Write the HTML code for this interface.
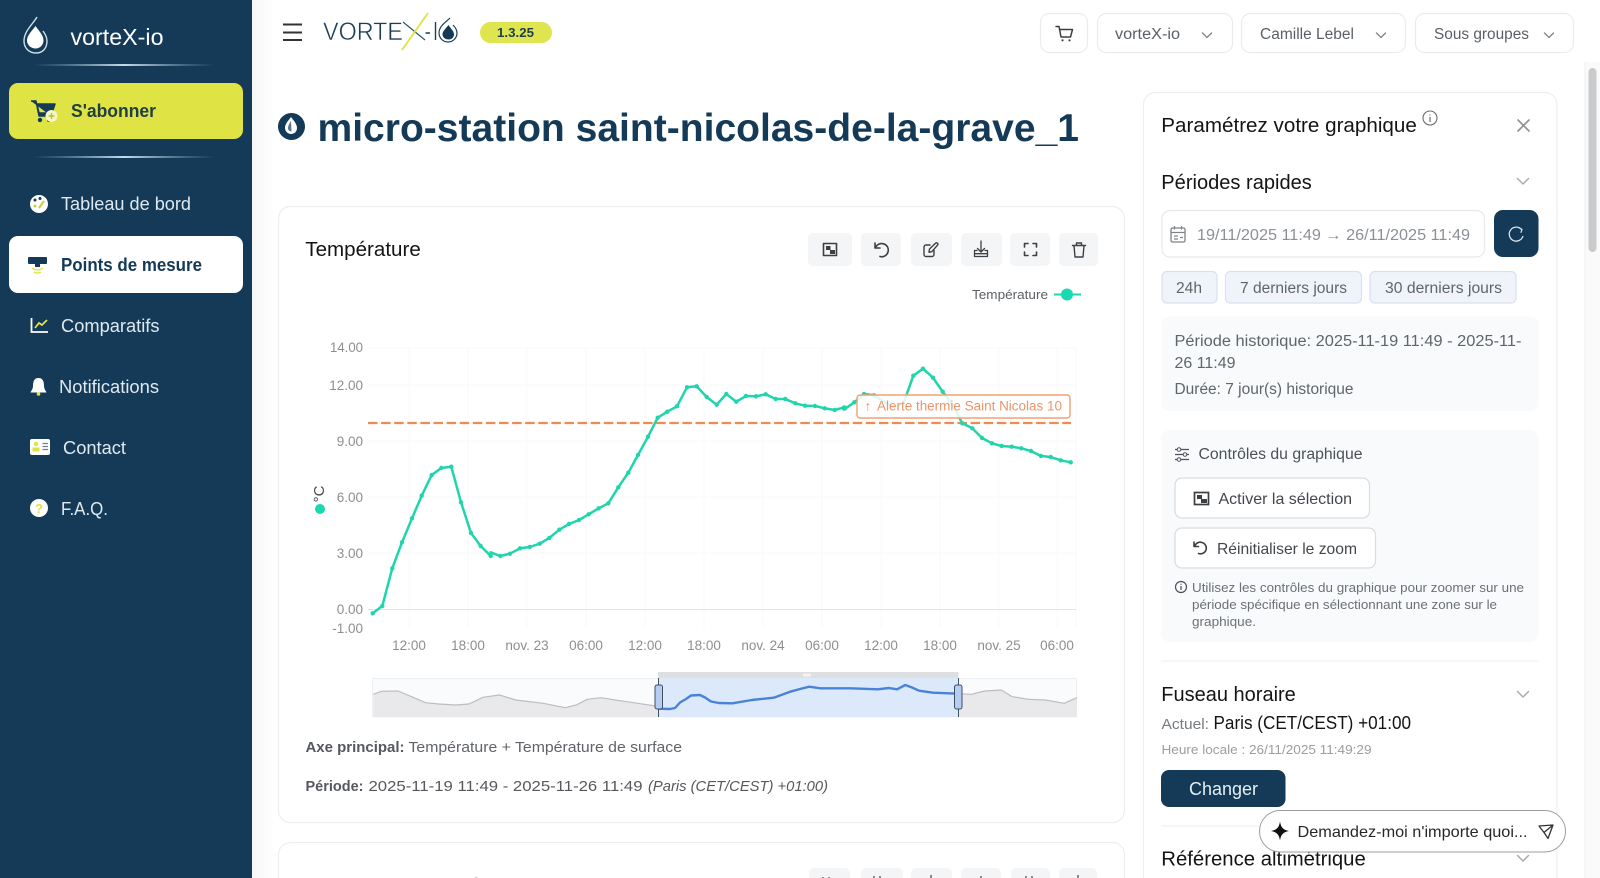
<!DOCTYPE html>
<html lang="fr"><head><meta charset="utf-8"><title>micro-station saint-nicolas-de-la-grave_1</title>
<style>
html,body{margin:0;padding:0;background:#fff;width:1600px;height:878px;overflow:hidden}
svg{display:block}
text{font-family:"Liberation Sans",sans-serif;white-space:pre}
.b{font-weight:700}
.g{fill:#5f656c;font-size:15.5px}
.y{fill:#8e8e91;font-size:13.5px;text-anchor:end}
.x{fill:#8e8e91;font-size:13.5px}
.n{fill:#dfe9f0;font-size:18px}
.h{fill:#141414;font-size:20.5px}
.i{fill:none;stroke:#3d4043;stroke-width:1.6;stroke-linecap:round;stroke-linejoin:round}
.c{fill:none;stroke:#a3a8ad;stroke-width:1.400;stroke-linecap:round;stroke-linejoin:round}
</style></head><body>
<svg width="1600" height="878" viewBox="0 0 1600 878" xmlns="http://www.w3.org/2000/svg">
<defs>
<linearGradient id="dv"><stop offset="0" stop-color="#8fb4cc" stop-opacity="0"/><stop offset=".5" stop-color="#c4dbe8"/><stop offset="1" stop-color="#8fb4cc" stop-opacity="0"/></linearGradient>
<linearGradient id="sh"><stop offset="0" stop-color="#f6f6f6"/><stop offset="1" stop-color="#fff"/></linearGradient>
</defs>
<rect width="1600" height="878" fill="#fff"/>
<rect x="252" y="0" width="22" height="878" fill="url(#sh)"/>

<!-- sidebar -->
<rect width="252" height="878" fill="#143a57"/>
<path d="M37 17C33 24 24 31 24 41C24 48 29 53 36 53C43 53 47 48 47 41C47 37 45 34 43 31" fill="none" stroke="#cfe0ea" stroke-width="1.400"/>
<path d="M35.500 26C32 31 27 35 27 40.500C27 45 31 48.500 35.500 48.500C40 48.500 43.500 45 43.500 40.500C43.500 35 39 31 35.500 26Z" fill="#fff"/>
<text x="70.500" y="45" font-size="23" fill="#fff" textLength="93" lengthAdjust="spacingAndGlyphs">vorteX-io</text>
<rect x="33" y="64" width="182" height="2" fill="url(#dv)"/>
<rect x="9" y="83" width="234" height="56" rx="9" fill="#dfe343"/>
<path d="M31 101H36L39 116H51M37 104H55L52 113H39Z" fill="#143a57" stroke="#143a57" stroke-width="1.500" stroke-linejoin="round"/>
<circle cx="40" cy="120" r="2.200" fill="#143a57"/><circle cx="49" cy="120" r="2" fill="#143a57"/>
<circle cx="51.500" cy="116" r="6" fill="#f4f6c4"/><path d="M48.500 116H54.500M51.500 113V119" stroke="#b8bd3b" stroke-width="1.400"/>
<text x="71" y="117" font-size="18" class="b" fill="#1f3f45" textLength="85" lengthAdjust="spacingAndGlyphs">S'abonner</text>
<rect x="33" y="156" width="182" height="2" fill="url(#dv)"/>

<circle cx="39" cy="204" r="9" fill="#fff"/><circle cx="35" cy="200" r="1.500" fill="#143a57"/><circle cx="40" cy="198.500" r="1.500" fill="#143a57"/><circle cx="35" cy="206" r="1.500" fill="#c9ce3a"/><path d="M39 208L44 201" stroke="#c9ce3a" stroke-width="2"/>
<text x="61" y="210" class="n" textLength="130" lengthAdjust="spacingAndGlyphs">Tableau de bord</text>

<rect x="9" y="236" width="234" height="57" rx="9" fill="#fff"/>
<rect x="28" y="257" width="19" height="7" rx="1" fill="#143a57"/><rect x="35" y="264" width="5" height="3" fill="#143a57"/><path d="M32 268Q37.500 272 43 268M34 272Q37.500 274 41 272" stroke="#dfe343" stroke-width="1.300" fill="none"/>
<text x="61" y="271" font-size="18" class="b" fill="#143a57" textLength="141" lengthAdjust="spacingAndGlyphs">Points de mesure</text>

<path d="M31.500 318V332H48" fill="none" stroke="#fff" stroke-width="1.800"/><path d="M35 328L39 323L42 325L47 320" fill="none" stroke="#dfe343" stroke-width="1.800"/>
<text x="61" y="332" class="n" textLength="98.500" lengthAdjust="spacingAndGlyphs">Comparatifs</text>

<path d="M38.500 378C34 378 33 382 33 386C33 389 31 391 30.500 392.500H46.500C46 391 44 389 44 386C44 382 43 378 38.500 378Z" fill="#fff"/><circle cx="38.500" cy="394" r="1.800" fill="#dfe343"/>
<text x="59" y="393" class="n" textLength="100" lengthAdjust="spacingAndGlyphs">Notifications</text>

<rect x="30" y="439" width="20" height="16" rx="2" fill="#fff"/><circle cx="36" cy="444" r="2.200" fill="#dfe343"/><rect x="32.500" y="447.500" width="7" height="4" fill="#dfe343"/><path d="M42.500 443.500H48M42.500 446.500H48M42.500 449.500H48" stroke="#6f7f8c" stroke-width="1.200"/>
<text x="63" y="454" class="n" textLength="63" lengthAdjust="spacingAndGlyphs">Contact</text>

<circle cx="39" cy="508" r="9" fill="#fff"/><text x="39" y="513" font-size="13" class="b" fill="#dfe343" text-anchor="middle">?</text>
<text x="61" y="515" class="n" textLength="47" lengthAdjust="spacingAndGlyphs">F.A.Q.</text>

<!-- top bar -->
<path d="M283 24.500H302M283 32.500H302M283 40H302" stroke="#333" stroke-width="1.900"/>
<text x="323" y="40" font-size="25" fill="#1d3f55" stroke="#fff" stroke-width=".45" textLength="80" lengthAdjust="spacingAndGlyphs">VORTE</text>
<path d="M403 22L425 40" stroke="#32566c" stroke-width="1.200"/>
<path d="M402 50L428 13" stroke="#dfe343" stroke-width="1.800"/>
<path d="M425.500 33H430" stroke="#1d3f55" stroke-width="1.500"/>
<path d="M435.500 22V40" stroke="#1d3f55" stroke-width="1.400"/>
<path d="M450 18C446 22 439 26 439 33C439 38 443 42 448 42C453 42 457 38 457 33C457 30 455 27 453 25" fill="none" stroke="#1d3f55" stroke-width="1.200"/>
<path d="M448.500 25C445.500 29 442.500 31 442.500 34.500C442.500 37.500 445.500 39.500 448.500 39.500C451.500 39.500 454 37.500 454 34.500C454 31 451 29 448.500 25Z" fill="#143a57"/>
<rect x="480" y="22" width="72" height="21" rx="10.500" fill="#dfe54e"/>
<text x="497" y="37" font-size="13" class="b" fill="#1f3f50" textLength="37" lengthAdjust="spacingAndGlyphs">1.3.25</text>

<g fill="#fff" stroke="#e9ecef" stroke-width="1.200">
<rect x="1040.500" y="13.500" width="47" height="39" rx="9"/>
<rect x="1097.500" y="13.500" width="135" height="39" rx="9"/>
<rect x="1241.500" y="13.500" width="164" height="39" rx="9"/>
<rect x="1415.500" y="13.500" width="158" height="39" rx="9"/>
</g>
<path d="M1056 26.500H1059L1061 37H1070.500L1072.500 29.500H1060" class="i" style="stroke-width:1.500"/><circle cx="1062.500" cy="40.300" r="1.100" fill="#3d4043"/><circle cx="1069.500" cy="40.300" r="1.100" fill="#3d4043"/>
<g font-size="15.500" fill="#5b6066">
<text x="1115" y="39" textLength="65" lengthAdjust="spacingAndGlyphs">vorteX-io</text>
<text x="1260" y="39" textLength="94" lengthAdjust="spacingAndGlyphs">Camille Lebel</text>
<text x="1434" y="39" textLength="95" lengthAdjust="spacingAndGlyphs">Sous groupes</text>
</g>
<path d="M1202.500 33L1207 37.500L1211.500 33M1376.500 33L1381 37.500L1385.500 33M1544.500 33L1549 37.500L1553.500 33" class="c" style="stroke:#82878d"/>

<!-- scrollbar -->
<rect x="1585" y="62" width="15" height="816" fill="#fafafa"/><path d="M1585 62V878" stroke="#efefef"/>
<rect x="1588.500" y="68" width="8" height="184" rx="4" fill="#c8cacc"/>

<!-- title -->
<circle cx="291.500" cy="126.500" r="13.500" fill="#143a57"/>
<path d="M291 117C288 121 285 124 285 128C285 131.500 288 134 291 134C294.500 134 297 131.500 297 128C297 124 294 121 291 117Z" fill="#fff"/>
<path d="M291 121C289 124 288 126 288 128C288 130 289.500 131.500 291.500 131.500" fill="#143a57" opacity=".7"/>
<text x="317.500" y="141" font-size="39" class="b" fill="#143a57" textLength="761.500" lengthAdjust="spacingAndGlyphs">micro-station saint-nicolas-de-la-grave_1</text>

<!-- main card -->
<rect x="278.500" y="206.500" width="846" height="616" rx="12" fill="#fff" stroke="#eceef0" stroke-width="1.200"/>
<text x="305.300" y="256" font-size="20.500" fill="#141414" textLength="115.500" lengthAdjust="spacingAndGlyphs">Température</text>
<g fill="#f4f5f6">
<rect x="808" y="233" width="44" height="33" rx="5"/><rect x="861" y="233" width="40" height="33" rx="5"/><rect x="911" y="233" width="41" height="33" rx="5"/><rect x="961" y="233" width="41" height="33" rx="5"/><rect x="1010" y="233" width="40" height="33" rx="5"/><rect x="1059" y="233" width="39" height="33" rx="5"/>
</g>
<g class="i">
<rect x="823.500" y="243.500" width="13" height="12" fill="none" stroke="#3d4043"/><rect x="826" y="246" width="4.500" height="4" fill="#3d4043" stroke="none"/><rect x="830" y="250" width="5" height="4" fill="#3d4043" stroke="none"/>
<path d="M875 243V248H880M875.500 247.500C877 244.500 880 243 883.500 243.800C887 244.800 889 248 888 252C887 255.500 883.500 257.500 880 256.500"/>
<path d="M934 250.500V254.500A2 2 0 0 1 932 256.500H926A2 2 0 0 1 924 254.500V247A2 2 0 0 1 926 245H930M929 252.300L929.500 249L935.500 243.200A1.300 1.300 0 0 1 937.500 245.200L931.800 251.700Z" style="stroke-width:1.400"/>
<path d="M981 241V252M977.500 248.500L981 252L984.500 248.500M977 250.500H974.500V256.500H987.500V250.500H985M974.500 253.700H987.500" style="stroke-width:1.300"/>
<path d="M1024.500 247V243.500H1028M1033 243.500H1036.500V247M1036.500 252V255.500H1033M1028 255.500H1024.500V252" style="stroke-width:1.600"/>
<path d="M1072.500 245.500H1085.500M1074 245.500L1075 257H1083L1084 245.500M1076.500 245.500V243H1081.500V245.500" style="stroke-width:1.400"/>
</g>
<text x="972" y="299" font-size="13" fill="#5c5f63" textLength="76" lengthAdjust="spacingAndGlyphs">Température</text>
<path d="M1054 294.500H1081" stroke="#19d9b0" stroke-width="2"/><circle cx="1067" cy="294.500" r="6" fill="#19d9b0"/>

<!-- chart grid -->
<g stroke="#f8f8f9" stroke-width="1">
<path d="M368 348H1076M368 385H1076M368 441H1076M368 497H1076M368 553H1076"/>
<path d="M409 348V628M468 348V628M527 348V628M586 348V628M645 348V628M704 348V628M763 348V628M822 348V628M881 348V628M940 348V628M999 348V628M1057 348V628M1076 348V628"/>
</g>
<path d="M368 609.500H1076" stroke="#e4e5e7"/>
<text x="363" y="352" class="y" textLength="33" lengthAdjust="spacingAndGlyphs">14.00</text>
<text x="363" y="390" class="y">12.00</text>
<text x="363" y="446" class="y">9.00</text>
<text x="363" y="502" class="y">6.00</text>
<text x="363" y="558" class="y">3.00</text>
<text x="363" y="614" class="y">0.00</text>
<text x="363" y="633" class="y">-1.00</text>
<g class="x" text-anchor="middle">
<text x="409" y="650">12:00</text><text x="468" y="650">18:00</text><text x="527" y="650">nov. 23</text><text x="586" y="650">06:00</text><text x="645" y="650">12:00</text><text x="704" y="650">18:00</text><text x="763" y="650">nov. 24</text><text x="822" y="650">06:00</text><text x="881" y="650">12:00</text><text x="940" y="650">18:00</text><text x="999" y="650">nov. 25</text><text x="1057" y="650">06:00</text>
</g>
<text transform="translate(324,494) rotate(-90)" font-size="15" fill="#44474b" text-anchor="middle">°C</text>
<circle cx="320" cy="509" r="5" fill="#19d9b0"/>

<!-- threshold -->
<path d="M368 423H1071" stroke="#ee8a52" stroke-width="2.200" stroke-dasharray="9.500 3.600"/>

<!-- series -->
<polyline fill="none" stroke="#20d4ac" stroke-width="2.500" stroke-linejoin="round" points="372.700,613.300 382.300,606 392.300,568.300 402,542.300 412,518.300 421.700,495.700 431.700,475 441.300,468 451.300,466.700 461,502.300 471,533 480.700,546 490.700,556 490.700,552.300 500.300,556 510,553.700 520,548.300 529.700,547 539.700,543.700 549.300,538 559.300,529.700 569,524 579,520 588.700,514.300 598.700,508.300 608.300,503.300 618.300,487.300 628.300,472.700 638,455 648,436.700 657.700,417.700 667.300,411.700 677,406.300 687,387.300 696.700,386.300 706.700,397 716.700,404.700 726.300,394 736.300,401.700 746,396 756,396.300 765.700,394.300 775.700,399 785.300,399 795.300,403.300 805,405.700 815,406 824.700,408.300 834.700,410 844.300,407.300 844.300,409.300 854.300,402.300 864,394 874,395.300 883.700,401.700 893.700,407 903.300,404 913.300,375.700 923,368.700 933,377.700 942.700,391.700 952.700,405 962.300,423.300 972.300,428.300 982,438 992,443.300 1001.700,446 1011.700,446.700 1021.300,448.300 1031,451 1041,456 1050.700,457 1060.700,460.300 1070.700,462.300"/>
<g fill="#20d4ac">
<circle cx="372.700" cy="613.300" r="2.200"/><circle cx="382.300" cy="606" r="2.200"/><circle cx="392.300" cy="568.300" r="2.200"/><circle cx="402" cy="542.300" r="2.200"/><circle cx="412" cy="518.300" r="2.200"/><circle cx="421.700" cy="495.700" r="2.200"/><circle cx="431.700" cy="475" r="2.200"/><circle cx="441.300" cy="468" r="2.200"/><circle cx="451.300" cy="466.700" r="2.200"/><circle cx="461" cy="502.300" r="2.200"/><circle cx="471" cy="533" r="2.200"/><circle cx="480.700" cy="546" r="2.200"/><circle cx="490.700" cy="556" r="2.200"/><circle cx="500.300" cy="556" r="2.200"/><circle cx="510" cy="553.700" r="2.200"/><circle cx="520" cy="548.300" r="2.200"/><circle cx="529.700" cy="547" r="2.200"/><circle cx="539.700" cy="543.700" r="2.200"/><circle cx="549.300" cy="538" r="2.200"/><circle cx="559.300" cy="529.700" r="2.200"/><circle cx="569" cy="524" r="2.200"/><circle cx="579" cy="520" r="2.200"/><circle cx="588.700" cy="514.300" r="2.200"/><circle cx="598.700" cy="508.300" r="2.200"/><circle cx="608.300" cy="503.300" r="2.200"/><circle cx="618.300" cy="487.300" r="2.200"/><circle cx="628.300" cy="472.700" r="2.200"/><circle cx="638" cy="455" r="2.200"/><circle cx="648" cy="436.700" r="2.200"/><circle cx="657.700" cy="417.700" r="2.200"/><circle cx="667.300" cy="411.700" r="2.200"/><circle cx="677" cy="406.300" r="2.200"/><circle cx="687" cy="387.300" r="2.200"/><circle cx="696.700" cy="386.300" r="2.200"/><circle cx="706.700" cy="397" r="2.200"/><circle cx="716.700" cy="404.700" r="2.200"/><circle cx="726.300" cy="394" r="2.200"/><circle cx="736.300" cy="401.700" r="2.200"/><circle cx="746" cy="396" r="2.200"/><circle cx="756" cy="396.300" r="2.200"/><circle cx="765.700" cy="394.300" r="2.200"/><circle cx="775.700" cy="399" r="2.200"/><circle cx="785.300" cy="399" r="2.200"/><circle cx="795.300" cy="403.300" r="2.200"/><circle cx="805" cy="405.700" r="2.200"/><circle cx="815" cy="406" r="2.200"/><circle cx="824.700" cy="408.300" r="2.200"/><circle cx="834.700" cy="410" r="2.200"/><circle cx="844.300" cy="408" r="2.800"/><circle cx="854.300" cy="402.300" r="2.200"/><circle cx="864" cy="394" r="2.200"/><circle cx="874" cy="395.300" r="2.200"/><circle cx="913.300" cy="375.700" r="2.200"/><circle cx="923" cy="368.700" r="2.200"/><circle cx="933" cy="377.700" r="2.200"/><circle cx="942.700" cy="391.700" r="2.200"/><circle cx="962.300" cy="423.300" r="2.200"/><circle cx="972.300" cy="428.300" r="2.200"/><circle cx="982" cy="438" r="2.200"/><circle cx="992" cy="443.300" r="2.200"/><circle cx="1001.700" cy="446" r="2.200"/><circle cx="1011.700" cy="446.700" r="2.200"/><circle cx="1021.300" cy="448.300" r="2.200"/><circle cx="1031" cy="451" r="2.200"/><circle cx="1041" cy="456" r="2.200"/><circle cx="1050.700" cy="457" r="2.200"/><circle cx="1060.700" cy="460.300" r="2.200"/><circle cx="1070.700" cy="462.300" r="2.200"/>
</g>
<rect x="857" y="395" width="213" height="23" rx="3" fill="#fff" fill-opacity=".85" stroke="#f0a071" stroke-width="1.400"/>
<text x="864.500" y="410.500" font-size="13.500" fill="#ec9467">↑</text>
<text x="877" y="410.500" font-size="13.500" fill="#ec9467" textLength="185" lengthAdjust="spacingAndGlyphs">Alerte thermie Saint Nicolas 10</text>

<!-- range slider -->
<rect x="372.500" y="678.500" width="704" height="38.500" fill="#fafbfd" stroke="#eef0f3"/>
<rect x="658" y="672" width="300.500" height="6" fill="#dedfe1"/><rect x="803" y="673.500" width="8" height="3" fill="#f2f2f2"/>
<path d="M373.300 694.300L381.500 691.300L398 691L411.600 696.700L425.400 702.700L439 704L455.500 705L469 704L483 697.300L499.400 695L515.900 700L543.300 703.300L565.200 707.700L576.200 705L587.200 699.300L600.900 697.700L620 700.700L655.800 706L658.500 708V717H373.300Z" fill="#e9e9eb" stroke="none"/>
<path d="M373.300 694.300L381.500 691.300L398 691L411.600 696.700L425.400 702.700L439 704L455.500 705L469 704L483 697.300L499.400 695L515.900 700L543.300 703.300L565.200 707.700L576.200 705L587.200 699.300L600.900 697.700L620 700.700L655.800 706L658.500 708" fill="none" stroke="#bdbdc0" stroke-width="1.200" stroke-linejoin="round"/>
<path d="M958.500 693.700L971.200 694.300L984.900 691L1001.300 690L1012.300 696.700L1028.800 699.300L1045.200 700L1064.400 703.300L1077 697.700V717H958.500Z" fill="#e9e9eb"/>
<path d="M958.500 693.700L971.200 694.300L984.900 691L1001.300 690L1012.300 696.700L1028.800 699.300L1045.200 700L1064.400 703.300L1077 697.700" fill="none" stroke="#bdbdc0" stroke-width="1.200" stroke-linejoin="round"/>
<rect x="658.500" y="678" width="300" height="39" fill="#dce9fb"/>
<path d="M658.500 708.700L670 709L675 708L680 702.500L686 699L691 695.500L700 695L705.100 697.500L711 701.500L718.800 703L732.500 703.300L751.700 700L773.700 697.700L790.100 691.700L800 689L809.300 686.700L820.300 688.300L850.500 688.300L877.900 689.300L888.900 688L897.100 689.300L905.300 685L912 687.500L919 690.700L932.800 692.700L958.500 693.700" fill="none" stroke="#4a82d8" stroke-width="2.400" stroke-linejoin="round"/>
<path d="M658.500 678V717M958.500 678V717" stroke="#3f5060" stroke-width="1"/>
<rect x="655" y="685" width="7.500" height="24" rx="2" fill="#b5cdf4" stroke="#3f5060"/>
<rect x="954.500" y="685" width="7.500" height="24" rx="2" fill="#b5cdf4" stroke="#3f5060"/>

<text x="305.500" y="752" font-size="15" class="b" fill="#55585c" textLength="99" lengthAdjust="spacingAndGlyphs">Axe principal:</text>
<text x="408.500" y="752" font-size="15" fill="#606368" textLength="273.500" lengthAdjust="spacingAndGlyphs">Température + Température de surface</text>
<text x="305.500" y="791" font-size="15" class="b" fill="#55585c" textLength="58" lengthAdjust="spacingAndGlyphs">Période:</text>
<text x="368.500" y="791" font-size="15" fill="#55585c" textLength="274" lengthAdjust="spacingAndGlyphs">2025-11-19 11:49 - 2025-11-26 11:49</text>
<text x="648" y="791" font-size="15" font-style="italic" fill="#55585c" textLength="180" lengthAdjust="spacingAndGlyphs">(Paris (CET/CEST) +01:00)</text>

<!-- second card -->
<rect x="278.500" y="842.500" width="846" height="60" rx="12" fill="#fff" stroke="#eceef0" stroke-width="1.200"/>
<g fill="#f4f5f6">
<rect x="809" y="868" width="41" height="33" rx="5"/><rect x="861" y="868" width="42" height="33" rx="5"/><rect x="911" y="868" width="41" height="33" rx="5"/><rect x="961" y="868" width="40" height="33" rx="5"/><rect x="1011" y="868" width="39" height="33" rx="5"/><rect x="1059" y="868" width="38" height="33" rx="5"/>
</g>
<path d="M823 877V878M829 877V878M874 876V878M880 876V878M931 875V878M981 876V878M1026 876V878M1032 876V878M1078 875V878" stroke="#666" stroke-width="1.500"/>
<text x="305.500" y="893" font-size="20.500" fill="#141414" textLength="400" lengthAdjust="spacingAndGlyphs">Vitesse du vent à la distance moyenne</text>

<!-- settings panel -->
<rect x="1143.500" y="92.500" width="413.500" height="800" rx="12" fill="#fff" stroke="#eceef0" stroke-width="1.200"/>
<text x="1161.300" y="132" class="h" textLength="255.500" lengthAdjust="spacingAndGlyphs">Paramétrez votre graphique</text>
<circle cx="1430" cy="118" r="7" fill="none" stroke="#6a6d70" stroke-width="1.100"/><path d="M1430 117V122M1430 114.500V115.500" stroke="#6a6d70" stroke-width="1.200"/>
<path d="M1518 120L1529 131M1529 120L1518 131" stroke="#8b9095" stroke-width="1.600" stroke-linecap="round"/>
<text x="1161.300" y="189" class="h" textLength="150.500" lengthAdjust="spacingAndGlyphs">Périodes rapides</text>
<path d="M1517.500 178.500L1523 184L1528.500 178.500" class="c"/>
<rect x="1162" y="210.500" width="322.500" height="46.500" rx="8" fill="#fff" stroke="#e6e9ed" stroke-width="1.200"/>
<rect x="1171" y="228" width="14" height="14" rx="1.500" fill="none" stroke="#7f8489" stroke-width="1.300"/><path d="M1171 232.500H1185M1174.500 226V229.500M1181.500 226V229.500M1174 236H1178M1174 239H1178M1180 237.500H1183" stroke="#7f8489" stroke-width="1.200"/>
<text x="1197" y="240" font-size="15.500" fill="#8b9096" textLength="273" lengthAdjust="spacingAndGlyphs">19/11/2025 11:49 → 26/11/2025 11:49</text>
<rect x="1494" y="210" width="44.500" height="47" rx="9" fill="#143a57"/>
<path d="M1521.500 229.500A7 7 0 1 0 1523 236" fill="none" stroke="#d8e4ec" stroke-width="1.300"/><path d="M1518.800 227.500L1522 229.500L1520.800 232.800" fill="none" stroke="#d8e4ec" stroke-width="1.200"/>
<g fill="#f0f4fa" stroke="#d7e1f0" stroke-width="1.200">
<rect x="1162" y="271.500" width="55" height="31.500" rx="5"/>
<rect x="1225.500" y="271.500" width="136" height="31.500" rx="5"/>
<rect x="1370" y="271.500" width="146" height="31.500" rx="5"/>
</g>
<text x="1176" y="293" class="g" textLength="26" lengthAdjust="spacingAndGlyphs">24h</text>
<text x="1240" y="293" class="g" textLength="107" lengthAdjust="spacingAndGlyphs">7 derniers jours</text>
<text x="1385" y="293" class="g" textLength="117" lengthAdjust="spacingAndGlyphs">30 derniers jours</text>

<rect x="1161.500" y="316.500" width="377" height="94.500" rx="8" fill="#f8fafc"/>
<text x="1174.500" y="346" class="g" textLength="347" lengthAdjust="spacingAndGlyphs">Période historique: 2025-11-19 11:49 - 2025-11-</text>
<text x="1174.500" y="368" class="g" textLength="61" lengthAdjust="spacingAndGlyphs">26 11:49</text>
<text x="1174.500" y="394" class="g" textLength="179" lengthAdjust="spacingAndGlyphs">Durée: 7 jour(s) historique</text>

<rect x="1161.500" y="430" width="377" height="212" rx="8" fill="#f8fafc"/>
<path d="M1175 449.500H1189M1175 454.500H1189M1175 459.500H1189" stroke="#4d5157" stroke-width="1.300"/><circle cx="1179" cy="449.500" r="1.800" fill="#f8fafc" stroke="#4d5157"/><circle cx="1185" cy="454.500" r="1.800" fill="#f8fafc" stroke="#4d5157"/><circle cx="1179" cy="459.500" r="1.800" fill="#f8fafc" stroke="#4d5157"/>
<text x="1198.500" y="459" class="g" style="fill:#4d5157" textLength="164" lengthAdjust="spacingAndGlyphs">Contrôles du graphique</text>
<rect x="1175" y="478" width="194.500" height="40" rx="7" fill="#fff" stroke="#d9dce0" stroke-width="1.200"/>
<rect x="1194.500" y="492.500" width="14" height="12" fill="none" stroke="#3d4043" stroke-width="1.700"/><rect x="1197" y="495" width="5" height="4" fill="#3d4043"/><rect x="1201" y="499" width="6" height="4" fill="#3d4043"/>
<text x="1218.500" y="504" font-size="16" fill="#43474c" textLength="133.500" lengthAdjust="spacingAndGlyphs">Activer la sélection</text>
<rect x="1175" y="528" width="200.500" height="40" rx="7" fill="#fff" stroke="#d9dce0" stroke-width="1.200"/>
<path d="M1194 542V546.500H1198.500M1194.500 546C1196 543 1199 541.500 1202 542.500C1205.500 543.500 1207 547 1206 550C1205 553 1201.500 554.500 1198.500 553.500" class="i"/>
<text x="1217" y="554" font-size="16" fill="#43474c" textLength="140" lengthAdjust="spacingAndGlyphs">Réinitialiser le zoom</text>
<circle cx="1181" cy="587" r="5.500" fill="none" stroke="#4d5157" stroke-width="1.200"/><path d="M1181 586V590M1181 583.800V584.800" stroke="#4d5157" stroke-width="1.200"/>
<g font-size="13" fill="#6b7077">
<text x="1192" y="592" textLength="332" lengthAdjust="spacingAndGlyphs">Utilisez les contrôles du graphique pour zoomer sur une</text>
<text x="1192" y="609" textLength="305" lengthAdjust="spacingAndGlyphs">période spécifique en sélectionnant une zone sur le</text>
<text x="1192" y="626" textLength="64" lengthAdjust="spacingAndGlyphs">graphique.</text>
</g>
<path d="M1161.500 661H1538.500" stroke="#eff0f2" stroke-width="1.200"/>
<text x="1161.300" y="701" class="h" textLength="134.500" lengthAdjust="spacingAndGlyphs">Fuseau horaire</text>
<path d="M1517.500 691.500L1523 697L1528.500 691.500" class="c"/>
<text x="1161.500" y="729" font-size="15" fill="#777b80" textLength="47.500" lengthAdjust="spacingAndGlyphs">Actuel:</text>
<text x="1213.500" y="729" font-size="18" fill="#141414" textLength="197.500" lengthAdjust="spacingAndGlyphs">Paris (CET/CEST) +01:00</text>
<text x="1161.500" y="754" font-size="13" fill="#9a9da1" textLength="210" lengthAdjust="spacingAndGlyphs">Heure locale : 26/11/2025 11:49:29</text>
<rect x="1161" y="770" width="124.500" height="37" rx="8" fill="#143a57"/>
<text x="1189" y="795" font-size="18" fill="#e6eff4" textLength="69" lengthAdjust="spacingAndGlyphs">Changer</text>
<path d="M1161.500 826H1538.500" stroke="#eff0f2" stroke-width="1.200"/>
<text x="1161.300" y="865.500" class="h" textLength="204.500" lengthAdjust="spacingAndGlyphs">Référence altimétrique</text>
<path d="M1517.500 855.500L1523 861L1528.500 855.500" class="c"/>

<!-- chat pill -->
<rect x="1259.500" y="810.500" width="306" height="41.500" rx="20.750" fill="#fff" stroke="#9a9c9f" stroke-width="1"/>
<path d="M1280 821.500C1281 827.500 1283 829.800 1289 831C1283 832.200 1281 834.500 1280 840.500C1279 834.500 1277 832.200 1271 831C1277 829.800 1279 827.500 1280 821.500Z" fill="#111"/>
<text x="1297.500" y="837" font-size="16" fill="#25282b" textLength="230" lengthAdjust="spacingAndGlyphs">Demandez-moi n'importe quoi...</text>
<path d="M1539 826L1553 825L1548 838.500L1544 832.500ZM1544 832.500L1553 825" fill="none" stroke="#333" stroke-width="1.300" stroke-linejoin="round"/>
</svg>
</body></html>
